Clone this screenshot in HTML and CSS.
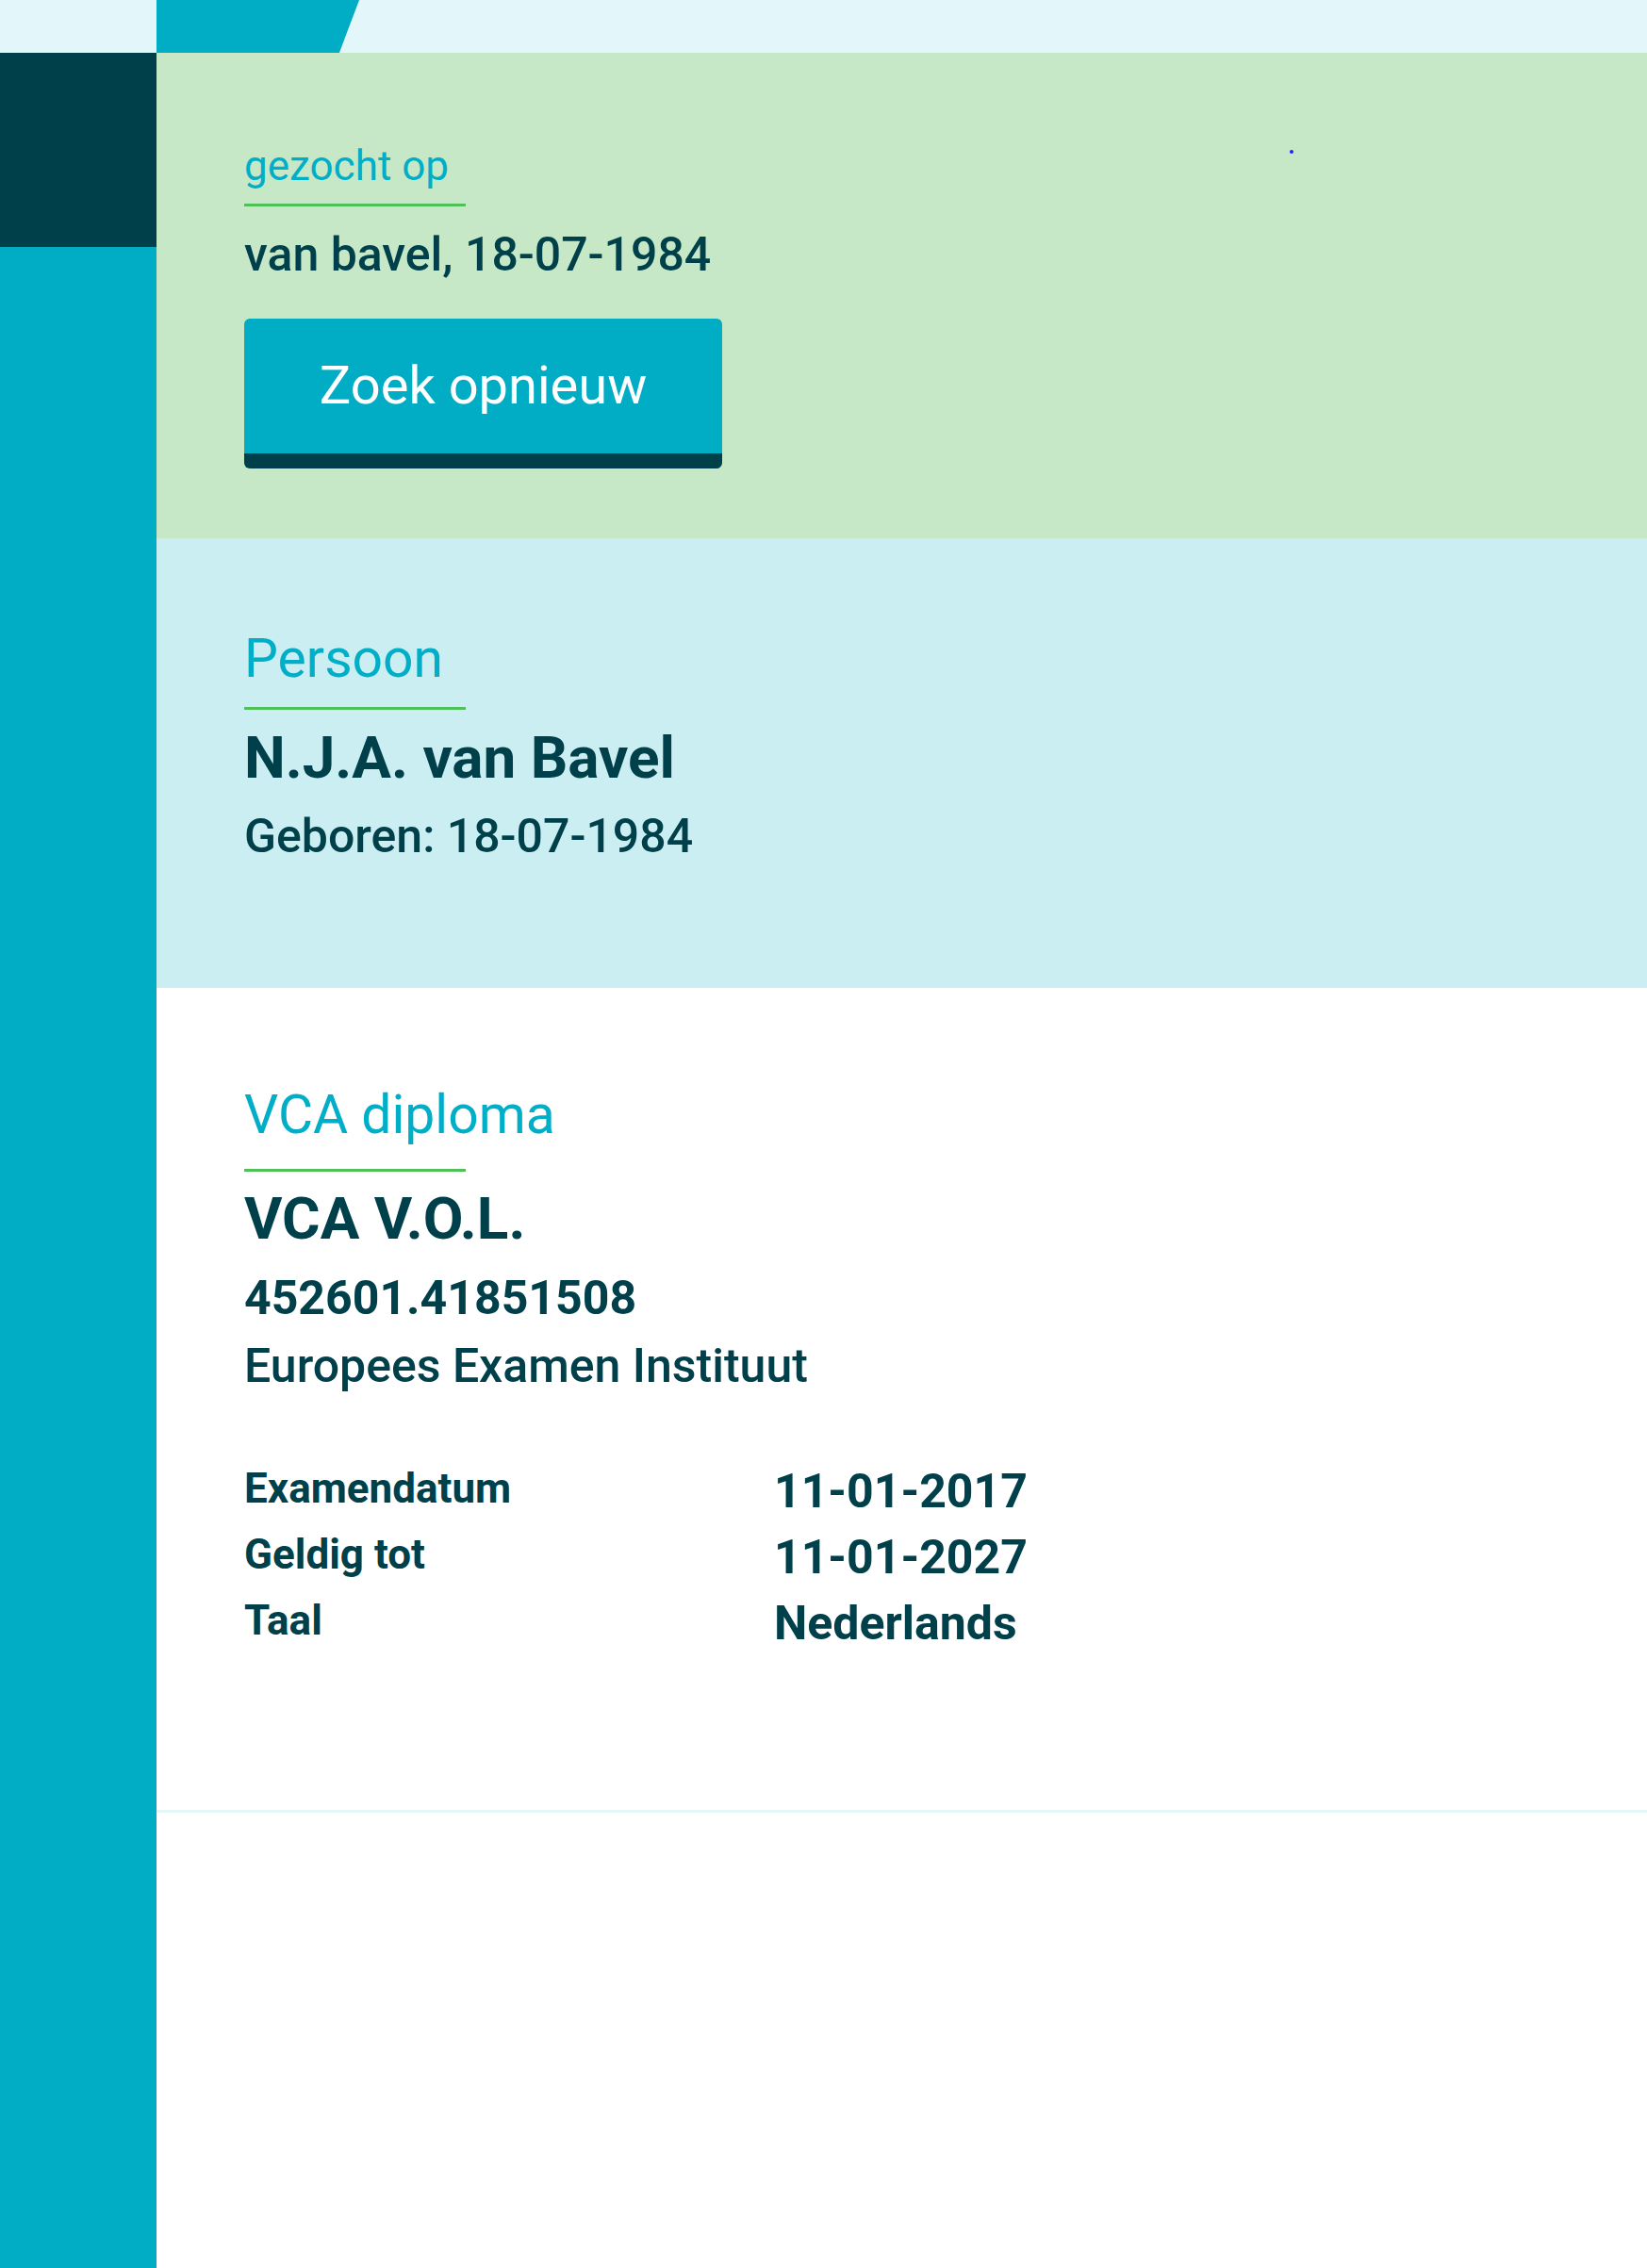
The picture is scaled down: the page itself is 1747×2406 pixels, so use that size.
FILE: index.html
```html
<!DOCTYPE html>
<html lang="nl">
<head>
    <meta charset="UTF-8">
    <meta name="viewport" content="width=device-width, initial-scale=1.0">
    <title>VCA diploma zoeken</title>
    <link rel="stylesheet" href="styles.css">
</head>
<body>
    <header class="topbar">
        <div class="topbar-tab"></div>
    </header>

    <div class="page">
        <aside class="sidebar">
            <div class="sidebar-block"></div>
        </aside>

        <main class="content">
            <section class="panel panel-search">
                <h2 class="panel-label">gezocht op</h2>
                <p class="query">van bavel, 18-07-1984</p>
                <button class="button">Zoek opnieuw</button>
                <span class="dot"></span>
            </section>

            <section class="panel panel-person">
                <h2 class="panel-title">Persoon</h2>
                <p class="name">N.J.A. van Bavel</p>
                <p class="born">Geboren: 18-07-1984</p>
            </section>

            <section class="panel panel-diploma">
                <h2 class="panel-title panel-title-wide">VCA diploma</h2>
                <p class="name">VCA V.O.L.</p>
                <p class="number">452601.41851508</p>
                <p class="institute">Europees Examen Instituut</p>

                <div class="details">
                    <div class="details-label">Examendatum</div>
                    <div class="details-value">11-01-2017</div>
                    <div class="details-label">Geldig tot</div>
                    <div class="details-value">11-01-2027</div>
                    <div class="details-label">Taal</div>
                    <div class="details-value">Nederlands</div>
                </div>
            </section>
        </main>
    </div>
</body>
</html>
```

FILE: styles.css
```css
body {
    margin: 0;
    font-family: Roboto, "Noto Sans", sans-serif;
    color: #00404a;
    background-color: #fff;
}
h2, p {
    margin: 0;
    font-weight: 400;
}
.topbar {
    height: 56px;
    background-color: #e3f6fa;
}
.topbar-tab {
    margin-left: 166px;
    width: 215px;
    height: 56px;
    background-color: #00adc5;
    clip-path: polygon(0 0, 100% 0, 90.2% 100%, 0 100%);
}
.page {
    display: flex;
    min-height: calc(100vh - 56px);
}
.sidebar {
    width: 166px;
    flex-shrink: 0;
    background-color: #00adc5;
}
.sidebar-block {
    height: 206px;
    background-color: #00404a;
}
.content {
    flex: 1;
}
.panel {
    position: relative;
    padding-left: 93px;
}
.panel-search {
    padding-top: 93px;
    padding-bottom: 74px;
    background-color: #c6e8c7;
}
.panel-person {
    padding-top: 94px;
    padding-bottom: 131px;
    background-color: #cbeef2;
}
.panel-diploma {
    padding-top: 101px;
    padding-bottom: 163px;
    border-bottom: 3px solid #e5f6f9;
}
.panel-label,
.panel-title {
    width: 235px;
    box-sizing: border-box;
    white-space: nowrap;
    color: #00aec7;
    border-bottom: 3px solid #4fc156;
}
.panel-label {
    font-size: 44px;
    line-height: 54px;
    padding-bottom: 13px;
}
.panel-title {
    font-size: 57px;
    line-height: 67px;
    padding-bottom: 18px;
}
.panel-title-wide {
    padding-bottom: 24px;
}
.query {
    margin-top: 21px;
    font-size: 50px;
    line-height: 60px;
    font-weight: 500;
}
.button {
    display: block;
    margin-top: 38px;
    width: 507px;
    height: 159px;
    padding: 0;
    font-family: Roboto, "Noto Sans", sans-serif;
    font-size: 56px;
    line-height: 143px;
    color: #fff;
    background-color: #00adc5;
    border: none;
    border-bottom: 16px solid #00404a;
    border-radius: 6px;
    cursor: pointer;
}
.dot {
    position: absolute;
    left: 1202px;
    top: 103px;
    width: 4px;
    height: 4px;
    border-radius: 50%;
    background-color: #2020ff;
}
.name {
    margin-top: 15px;
    font-size: 62px;
    line-height: 72px;
    font-weight: 700;
}
.born {
    margin-top: 17px;
    font-size: 50px;
    line-height: 60px;
    font-weight: 500;
}
.panel-diploma .name {
    margin-top: 14px;
}
.number {
    margin-top: 18px;
    font-size: 50px;
    line-height: 60px;
    font-weight: 700;
}
.institute {
    margin-top: 12px;
    font-size: 50px;
    line-height: 60px;
    font-weight: 500;
}
.details {
    display: grid;
    grid-template-columns: 562px auto;
    grid-auto-rows: 70px;
    align-items: start;
    margin-top: 68px;
}
.details-label {
    font-size: 44px;
    line-height: 64px;
    font-weight: 700;
}
.details-value {
    font-size: 50px;
    line-height: 70px;
    font-weight: 700;
}
```
